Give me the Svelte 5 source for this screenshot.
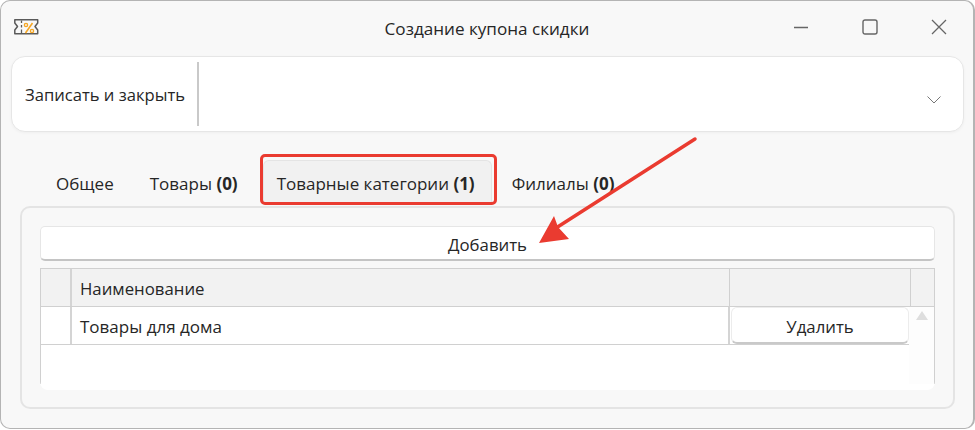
<script>
  const tabs = [
    { label: "Общее", count: null },
    { label: "Товары", count: 0 },
    { label: "Товарные категории", count: 1, active: true },
    { label: "Филиалы", count: 0 }
  ];
</script>

<div class="window">
  <header class="titlebar">
    <svg class="app-icon" width="25" height="16" viewBox="0 0 25 16" fill="none">
      <path d="M.8.800H23.700V4L21 7.500L23.700 11V14.700H.8V11L3.500 7.500L.8 4z" stroke="#5a5a5a" stroke-width="1.500" stroke-linejoin="round"/>
      <path d="M7.500 1.500v2.500M7.500 6v2.500M7.500 10.500V14" stroke="#5a5a5a" stroke-width="1.300"/>
      <path d="M18.500 4l-7 10" stroke="#f5a623" stroke-width="1.600"/>
      <circle cx="12" cy="6" r="1.600" stroke="#f5a623" stroke-width="1.400"/>
      <circle cx="18" cy="12" r="1.600" stroke="#f5a623" stroke-width="1.400"/>
    </svg>
    <div class="title">Создание купона скидки</div>
    <div class="controls">
      <svg width="16" height="16" viewBox="0 0 16 16"><path d="M1 8.500h14" stroke="#666" stroke-width="1.400"/></svg>
      <svg width="16" height="16" viewBox="0 0 16 16" fill="none"><rect x="1" y="1" width="14" height="14" rx="2" stroke="#666" stroke-width="1.400"/></svg>
      <svg width="16" height="16" viewBox="0 0 16 16"><path d="M1 1l14 14M15 1L1 15" stroke="#666" stroke-width="1.300"/></svg>
    </div>
  </header>

  <div class="toolbar">
    <div class="save">Записать и закрыть</div>
    <div class="sep"></div>
    <svg class="chevron" width="14" height="8" viewBox="0 0 14 8" fill="none"><path d="M.5.500L7 7l6.500-6.500" stroke="#777" stroke-width="1"/></svg>
  </div>

  <div class="tabs">
    {#each tabs as tab}
      <div class="tab" class:active={tab.active}>
        {tab.label}{#if tab.count !== null}&nbsp;<b>({tab.count})</b>{/if}
      </div>
    {/each}
  </div>

  <div class="panel">
    <div class="add">Добавить</div>
    <div class="table">
      <div class="row head">
        <div class="c-num"></div>
        <div class="c-name">Наименование</div>
        <div class="c-act"></div>
        <div class="c-scroll"></div>
      </div>
      <div class="body">
        <div class="rows">
          <div class="row item">
            <div class="c-num"></div>
            <div class="c-name">Товары для дома</div>
            <div class="c-act"><div class="del">Удалить</div></div>
          </div>
        </div>
        <div class="scrollbar"><span class="up"></span></div>
      </div>
    </div>
  </div>

  <div class="highlight"></div>
  <svg class="arrow" width="975" height="430" viewBox="0 0 975 430" fill="none">
    <path d="M695 139L556 228" stroke="#ea3b30" stroke-width="3.500" stroke-linecap="round"/>
    <path d="M539 243L554 216L558 227L569 239z" fill="#ea3b30"/>
  </svg>
</div>

<style>
  :global(body) {
    margin: 0;
    background: #fff;
  }

  .window {
    position: relative;
    box-sizing: border-box;
    width: 975px;
    height: 429px;
    background: #f8f8f8;
    border: 1px solid #b4b4b4;
    border-right-width: 2px;
    border-radius: 10px;
    font-family: "Open Sans", "Noto Sans", sans-serif;
    font-size: 16.8px;
    color: #262626;
    overflow: hidden;
  }

  .titlebar {
    display: grid;
    grid-template-columns: 1fr auto 1fr;
    align-items: center;
    box-sizing: border-box;
    height: 55px;
    padding: 0 26px 2px 13px;
  }

  .app-icon {
    margin-top: -2px;
  }

  .title {
    font-size: 17.1px;
    text-align: center;
    padding: 1px 0 0 13px;
  }

  .controls {
    display: flex;
    justify-content: flex-end;
    gap: 53px;
    margin-top: -2px;
  }

  .toolbar {
    display: flex;
    align-items: center;
    box-sizing: border-box;
    height: 76px;
    margin: 0 10px;
    width: 953px;
    background: #fff;
    border: 1px solid #e6e6e6;
    border-radius: 14px;
    box-shadow: 0 1px 3px rgba(0, 0, 0, 0.04);
    padding: 5px 22px 5px 13px;
  }

  .save {
    white-space: nowrap;
    font-size: 16.6px;
  }

  .sep {
    width: 2px;
    height: 64px;
    margin-left: 12px;
    background: #c9c9c9;
  }

  .chevron {
    margin-left: auto;
    margin-top: 11px;
  }

  .tabs {
    display: flex;
    align-items: flex-end;
    height: 74px;
    padding-left: 37px;
    font-size: 17px;
  }

  .tab {
    box-sizing: border-box;
    height: 46px;
    padding: 12px 18px 0;
    white-space: nowrap;
  }

  .tab.active {
    background: #f1f1f1;
    border: 1px solid #e4e4e4;
    border-bottom: none;
    border-radius: 6px 6px 0 0;
    padding: 11px 16px 0 13px;
    margin-left: 7px;
    margin-right: 2px;
    height: 44px;
    margin-bottom: 2px;
  }

  b {
    font-weight: 700;
  }

  .panel {
    box-sizing: border-box;
    height: 203px;
    margin: 0 19px;
    width: 935px;
    border: 2px solid #e4e4e4;
    border-radius: 10px;
    padding: 18px 18px 0;
  }

  .add {
    box-sizing: border-box;
    height: 35px;
    background: #fff;
    border: 1px solid #e6e6e6;
    border-bottom: 2px solid #c4c4c4;
    border-radius: 5px;
    text-align: center;
    line-height: 36px;
  }

  .table {
    height: 122px;
    margin-top: 7px;
    background: #fff;
    border-radius: 0 0 8px 8px;
    overflow: hidden;
  }

  .row {
    display: flex;
  }

  .head {
    height: 39px;
    background: #f2f2f2;
    border: 1px solid #d0d0d0;
    box-sizing: border-box;
  }

  .c-num {
    width: 29px;
    flex: none;
    border-right: 2px solid #d4d4d4;
  }

  .c-name {
    flex: 1;
    padding-left: 8px;
    line-height: 39px;
  }

  .c-act {
    width: 180px;
    flex: none;
    border-left: 1px solid #d0d0d0;
  }

  .c-scroll {
    width: 23px;
    flex: none;
    border-left: 1px solid #d0d0d0;
  }

  .item .c-act {
    border-left: none;
    width: 179px;
  }

  .body {
    display: flex;
    box-sizing: border-box;
    height: 77px;
    border-left: 1px solid #d0d0d0;
  }

  .rows {
    flex: 1;
  }

  .item {
    box-sizing: border-box;
    height: 38px;
    border-bottom: 1px solid #d0d0d0;
  }

  .item .c-name {
    font-size: 17px;
    line-height: 40px;
    border-right: 2px solid #d4d4d4;
  }

  .del {
    box-sizing: border-box;
    height: 37px;
    margin-left: 1px;
    background: #fff;
    border: 1px solid #ececec;
    border-bottom: 2px solid #c9c9c9;
    border-radius: 6px;
    text-align: center;
    line-height: 37px;
  }

  .scrollbar {
    box-sizing: border-box;
    width: 26px;
    flex: none;
    background: #fdfdfd;
    border-right: 1px solid #d0d0d0;
    padding-top: 4px;
    display: flex;
    justify-content: center;
    align-items: flex-start;
  }

  .up {
    width: 0;
    height: 0;
    border-left: 6px solid transparent;
    border-right: 6px solid transparent;
    border-bottom: 9px solid #dedede;
  }

  /* аннотации поверх скриншота */
  .highlight {
    position: absolute;
    left: 259px;
    top: 153px;
    width: 237px;
    height: 51px;
    box-sizing: border-box;
    border: 3px solid #ea3b30;
    border-radius: 5px;
  }

  .arrow {
    position: absolute;
    left: -1px;
    top: -1px;
    pointer-events: none;
  }
</style>
